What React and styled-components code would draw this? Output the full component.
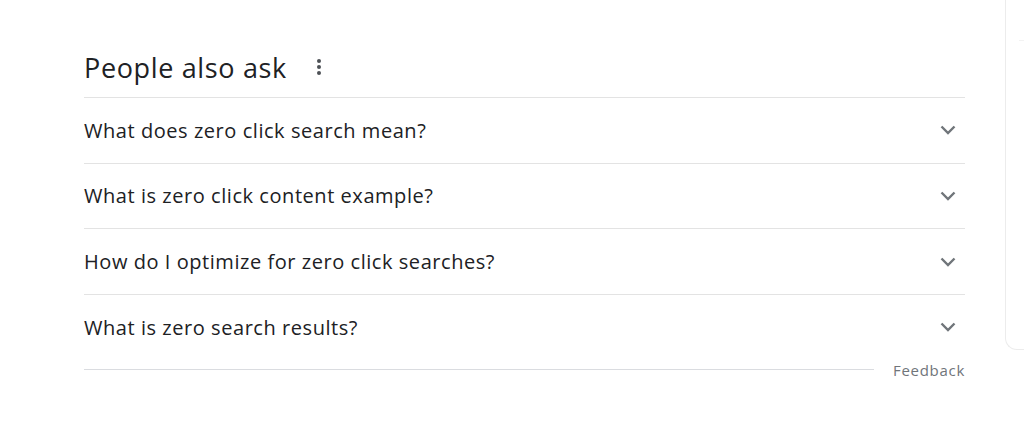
import React from "react";
import styled, { createGlobalStyle } from "styled-components";

const GlobalStyle = createGlobalStyle`
  html, body {
    margin: 0;
    padding: 0;
    background: #fff;
  }
  body {
    font-family: "Open Sans", "Liberation Sans", Arial, sans-serif;
    color: #202124;
  }
`;

const questions = [
  "What does zero click search mean?",
  "What is zero click content example?",
  "How do I optimize for zero click searches?",
  "What is zero search results?",
];

const Page = styled.div`
  display: flex;
  align-items: flex-start;
  padding-left: 84px;
  width: 1024px;
  height: 425px;
  box-sizing: border-box;
  overflow: hidden;
`;

const Main = styled.section`
  width: 881px;
  flex-shrink: 0;
  padding-top: 37px;
`;

const Header = styled.div`
  display: flex;
  align-items: center;
  height: 60px;
`;

const Title = styled.h2`
  margin: 0;
  font-size: 27px;
  font-weight: 400;
  color: #202124;
  letter-spacing: 0.65px;
`;

const MoreButton = styled.button`
  display: flex;
  align-items: center;
  justify-content: center;
  width: 24px;
  height: 24px;
  margin-left: 20px;
  padding: 0;
  border: none;
  background: none;
  color: #4d5156;
`;

const Row = styled.div`
  display: flex;
  align-items: center;
  justify-content: space-between;
  box-sizing: border-box;
  height: 65.67px;
  border-top: 1px solid #e3e3e3;
`;

const Question = styled.span`
  font-size: 20px;
  color: #202124;
  letter-spacing: 0.55px;
`;

const Chevron = styled.span`
  display: flex;
  width: 24px;
  justify-content: center;
  margin-right: 5px;
  color: #70757a;
`;

const Footer = styled.div`
  display: flex;
  align-items: center;
  height: 20px;
`;

const FooterLine = styled.div`
  flex: 1;
  height: 1px;
  background: #dadce0;
`;

const FeedbackLink = styled.span`
  margin-left: 19px;
  font-size: 15px;
  color: #70757a;
  letter-spacing: 0.7px;
`;

const SideCard = styled.aside`
  flex: 1;
  margin-left: 40px;
  height: 350px;
  border-left: 1px solid #ececec;
  border-bottom: 1px solid #ececec;
  border-bottom-left-radius: 12px;
  padding-top: 40px;
  box-sizing: border-box;
`;

const CardRule = styled.div`
  margin-left: 13px;
  height: 1px;
  background: #f3f3f3;
`;

const DotsIcon = () => (
  <svg width="4" height="16" viewBox="0 0 4 16">
    <circle cx="2" cy="2" r="2" fill="currentColor" />
    <circle cx="2" cy="8" r="2" fill="currentColor" />
    <circle cx="2" cy="14" r="2" fill="currentColor" />
  </svg>
);

const ChevronIcon = () => (
  <svg width="16" height="10" viewBox="0 0 16 10">
    <path d="M1.5 1.5 L8 8 L14.5 1.5" fill="none" stroke="currentColor" strokeWidth="2.4" />
  </svg>
);

export default function App() {
  return (
    <>
      <GlobalStyle />
      <Page>
        <Main>
          <Header>
            <Title>People also ask</Title>
            <MoreButton aria-label="More options">
              <DotsIcon />
            </MoreButton>
          </Header>
          {questions.map((q) => (
            <Row key={q}>
              <Question>{q}</Question>
              <Chevron>
                <ChevronIcon />
              </Chevron>
            </Row>
          ))}
          <Footer>
            <FooterLine />
            <FeedbackLink>Feedback</FeedbackLink>
          </Footer>
        </Main>
        <SideCard>
          <CardRule />
        </SideCard>
      </Page>
    </>
  );
}
